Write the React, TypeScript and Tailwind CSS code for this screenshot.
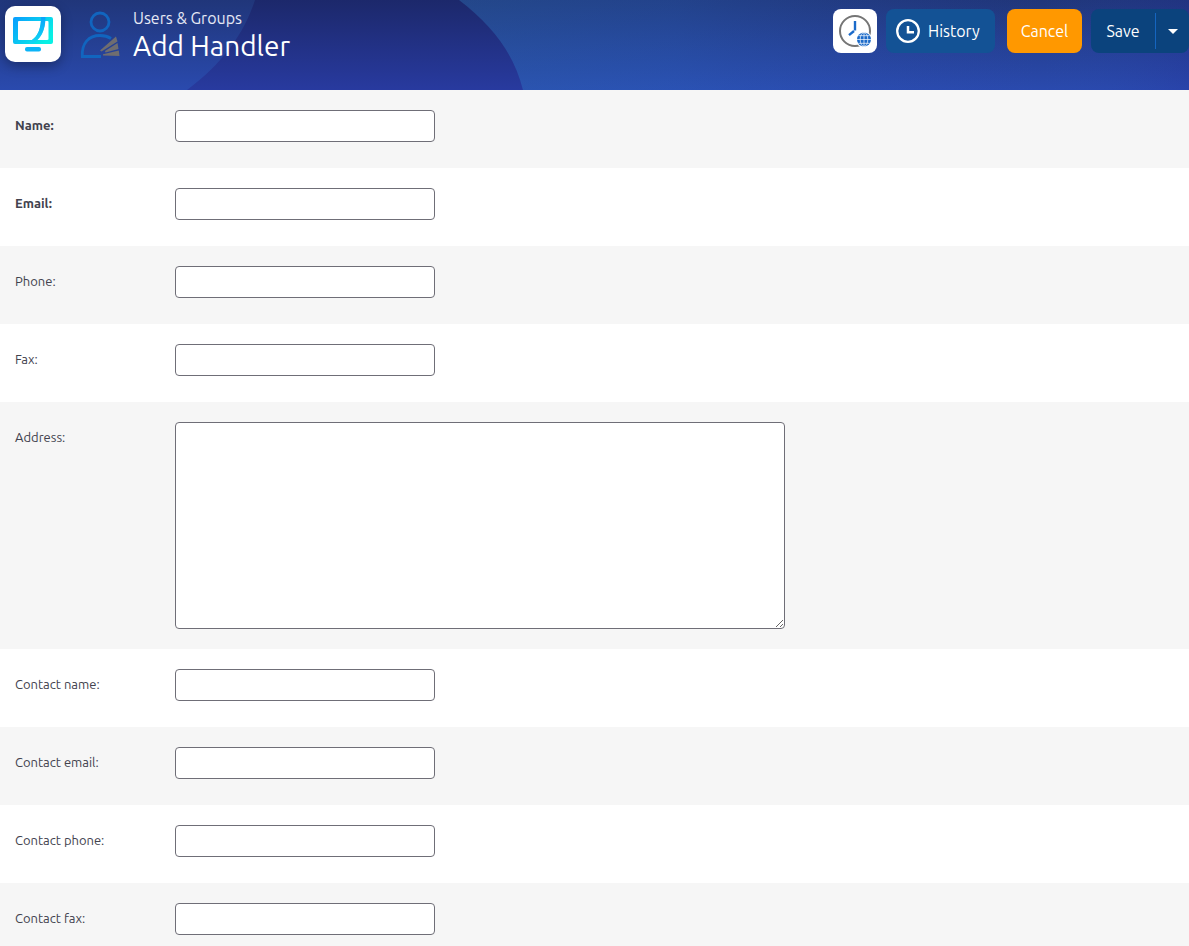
import { useState } from 'react';

interface Field {
  id: string;
  label: string;
  required?: boolean;
  multiline?: boolean;
}

const FIELDS: Field[] = [
  { id: 'name', label: 'Name:', required: true },
  { id: 'email', label: 'Email:', required: true },
  { id: 'phone', label: 'Phone:' },
  { id: 'fax', label: 'Fax:' },
  { id: 'address', label: 'Address:', multiline: true },
  { id: 'contactName', label: 'Contact name:' },
  { id: 'contactEmail', label: 'Contact email:' },
  { id: 'contactPhone', label: 'Contact phone:' },
  { id: 'contactFax', label: 'Contact fax:' },
];

const HeaderArt = () => (
  <svg
    className="absolute inset-0 h-full w-full"
    viewBox="0 0 1189 90"
    preserveAspectRatio="xMinYMin slice"
    aria-hidden="true"
  >
    <defs>
      <linearGradient id="hdrBase" x1="0" y1="0" x2="0" y2="1">
        <stop offset="0" stopColor="#20367a" />
        <stop offset="1" stopColor="#2a4aae" />
      </linearGradient>
      <linearGradient id="hdrBlob" x1="0" y1="0" x2="0" y2="1">
        <stop offset="0" stopColor="#1c286b" />
        <stop offset="1" stopColor="#283a9f" />
      </linearGradient>
      <linearGradient id="hdrTint" x1="0" y1="0" x2="1" y2="0">
        <stop offset="0" stopColor="#2c6fae" stopOpacity="0.3" />
        <stop offset="0.3" stopColor="#2c6fc8" stopOpacity="0.22" />
        <stop offset="0.8" stopColor="#2c50b8" stopOpacity="0" />
        <stop offset="1" stopColor="#24289a" stopOpacity="0.2" />
      </linearGradient>
    </defs>
    <rect width="1189" height="90" fill="url(#hdrBase)" />
    <rect x="455" width="734" height="90" fill="url(#hdrTint)" />
    <path d="M255 0 C244 34 222 64 187 90 H523 C514 54 493 26 459 0 Z" fill="url(#hdrBlob)" />
  </svg>
);

const MonitorLogo = () => (
  <svg width="56" height="56" viewBox="0 0 56 56" aria-hidden="true">
    <defs>
      <linearGradient id="logoFrame" x1="0" y1="0" x2="1" y2="0.6">
        <stop offset="0" stopColor="#0a9cff" />
        <stop offset="1" stopColor="#08f0e4" />
      </linearGradient>
      <linearGradient id="logoSwoosh" x1="0" y1="0" x2="0" y2="1">
        <stop offset="0" stopColor="#08a4fb" />
        <stop offset="1" stopColor="#12d8f2" />
      </linearGradient>
    </defs>
    <path
      fillRule="evenodd"
      fill="url(#logoFrame)"
      d="M10 11 H46 Q48 11 48 13 V36 Q48 38 46 38 H10 Q8 38 8 36 V13 Q8 11 10 11 Z M14 15 Q13 15 13 16 V33 Q13 34 14 34 H27 C33 30 35.500 23 36 15 Z M40 15 C39.500 23 37 29 32 34 H42 Q43.500 34 43.500 33 V16 Q43.500 15 42.500 15 Z"
    />
    <path d="M36 11 H40.500 C40.500 24 36 34 26 38 C23 38 24 36 27 34 C33 30 36 22 36 11 Z" fill="url(#logoSwoosh)" />
    <rect x="20" y="41" width="16" height="4.500" rx="2" fill="#0cb4f7" />
  </svg>
);

const HandlerIcon = () => (
  <svg width="40" height="48" viewBox="0 0 40 48" aria-hidden="true">
    <g fill="none" stroke="#1165bf" strokeWidth="2.800">
      <circle cx="20" cy="12" r="9" />
      <path d="M21 46.500 H2.300 C1.500 33 9 25.500 20 25.500 C24.500 25.500 28 26.500 31 28.500" />
    </g>
    <g fill="#6f6d70">
      <path d="M20 40.500 L36 26.500 L37.500 31.500 L21.500 41.500 Z" />
      <path d="M25 41 L37.500 33 L38.500 39 L25.500 42.500 Z" />
      <path d="M23 44.200 L38.800 40.500 L39.500 46 L23 45.500 Z" />
    </g>
  </svg>
);

const WorldClockIcon = () => (
  <svg width="44" height="44" viewBox="0 0 44 44" aria-hidden="true">
    <circle cx="22" cy="22" r="15" fill="none" stroke="#757575" strokeWidth="2" />
    <path d="M22 12 V21.500" stroke="#1b6ac9" strokeWidth="2.400" />
    <path d="M21 22 L16 26.200" stroke="#1b6ac9" strokeWidth="2.400" />
    <circle cx="31" cy="30.500" r="8" fill="#fff" />
    <circle cx="31" cy="30.500" r="7" fill="#1b6ac9" />
    <g fill="none" stroke="#fff" strokeWidth="0.700">
      <path d="M24 30.500 H38 M25.500 26.700 H36.500 M25.500 34.300 H36.500 M31 23.500 V37.500" />
      <ellipse cx="31" cy="30.500" rx="3.800" ry="7" />
    </g>
  </svg>
);

const HistoryIcon = () => (
  <svg width="24" height="24" viewBox="0 0 24 24" fill="none" stroke="#fff" aria-hidden="true">
    <circle cx="12" cy="12" r="10.800" strokeWidth="2.300" />
    <path d="M12 7 V13.200 H18" strokeWidth="2.500" />
  </svg>
);

const Header = () => (
  <header className="relative h-[90px] overflow-hidden bg-[#20367a] text-white">
    <HeaderArt />
    <div className="relative flex items-start justify-between pl-[5px]">
      <div className="flex items-start pt-1.5">
        <a
          href="#home"
          aria-label="Home"
          className="h-14 w-14 rounded-[10px] bg-white shadow-[0_4px_12px_rgba(0,0,0,0.3)]"
        >
          <MonitorLogo />
        </a>
        <div className="ml-[19px] pt-1">
          <HandlerIcon />
        </div>
        <div className="ml-[13px]">
          <p className="text-base leading-6 text-[#e6e9f5]">Users &amp; Groups</p>
          <h1 className="text-[28px] leading-8">Add Handler</h1>
        </div>
      </div>

      <div className="flex items-center pt-[9px] text-base">
        <button type="button" aria-label="Time zone" className="h-11 w-11 rounded-lg bg-white">
          <WorldClockIcon />
        </button>
        <button
          type="button"
          className="ml-[9px] flex h-11 w-[109px] items-center gap-2 rounded-lg bg-[#135295] pl-2.5"
        >
          <HistoryIcon />
          History
        </button>
        <button type="button" className="ml-3 h-11 w-[75px] rounded-lg bg-[#ff9800]">
          Cancel
        </button>
        <div className="ml-[9px] flex h-11 items-center rounded-lg bg-[#0b437d]">
          <button type="submit" form="handlerForm" className="h-11 w-16">
            Save
          </button>
          <button
            type="button"
            aria-label="More save options"
            className="flex h-9 w-[34px] items-center justify-center border-l border-[#1565c0]"
          >
            <svg width="10" height="5" viewBox="0 0 10 5" aria-hidden="true">
              <path d="M0 0 H10 L5 5 Z" fill="#fff" />
            </svg>
          </button>
        </div>
      </div>
    </div>
  </header>
);

export default function App() {
  const [values, setValues] = useState<Record<string, string>>({});

  const handleChange = (id: string, value: string) => {
    setValues(prev => ({ ...prev, [id]: value }));
  };

  return (
    <div className="bg-white font-['Ubuntu','Noto_Sans',sans-serif] text-[#42424e]">
      <Header />
      <form id="handlerForm" onSubmit={e => e.preventDefault()}>
        {FIELDS.map(field => (
          <div key={field.id} className="flex items-start px-[15px] pt-5 odd:bg-[#f6f6f6]">
            <label
              htmlFor={field.id}
              className={`w-40 shrink-0 text-[13px] leading-[30px] ${field.required ? 'font-semibold' : ''}`}
            >
              {field.label}
            </label>
            {field.multiline ? (
              <textarea
                id={field.id}
                value={values[field.id] ?? ''}
                onChange={e => handleChange(field.id, e.target.value)}
                className="mb-5 h-[207px] w-[610px] rounded border border-[#6f6e77] bg-white p-2 text-[13px]"
              />
            ) : (
              <input
                id={field.id}
                type="text"
                value={values[field.id] ?? ''}
                onChange={e => handleChange(field.id, e.target.value)}
                className="mb-[26px] h-8 w-[260px] rounded border border-[#6f6e77] bg-white px-2 text-[13px]"
              />
            )}
          </div>
        ))}
      </form>
    </div>
  );
}
